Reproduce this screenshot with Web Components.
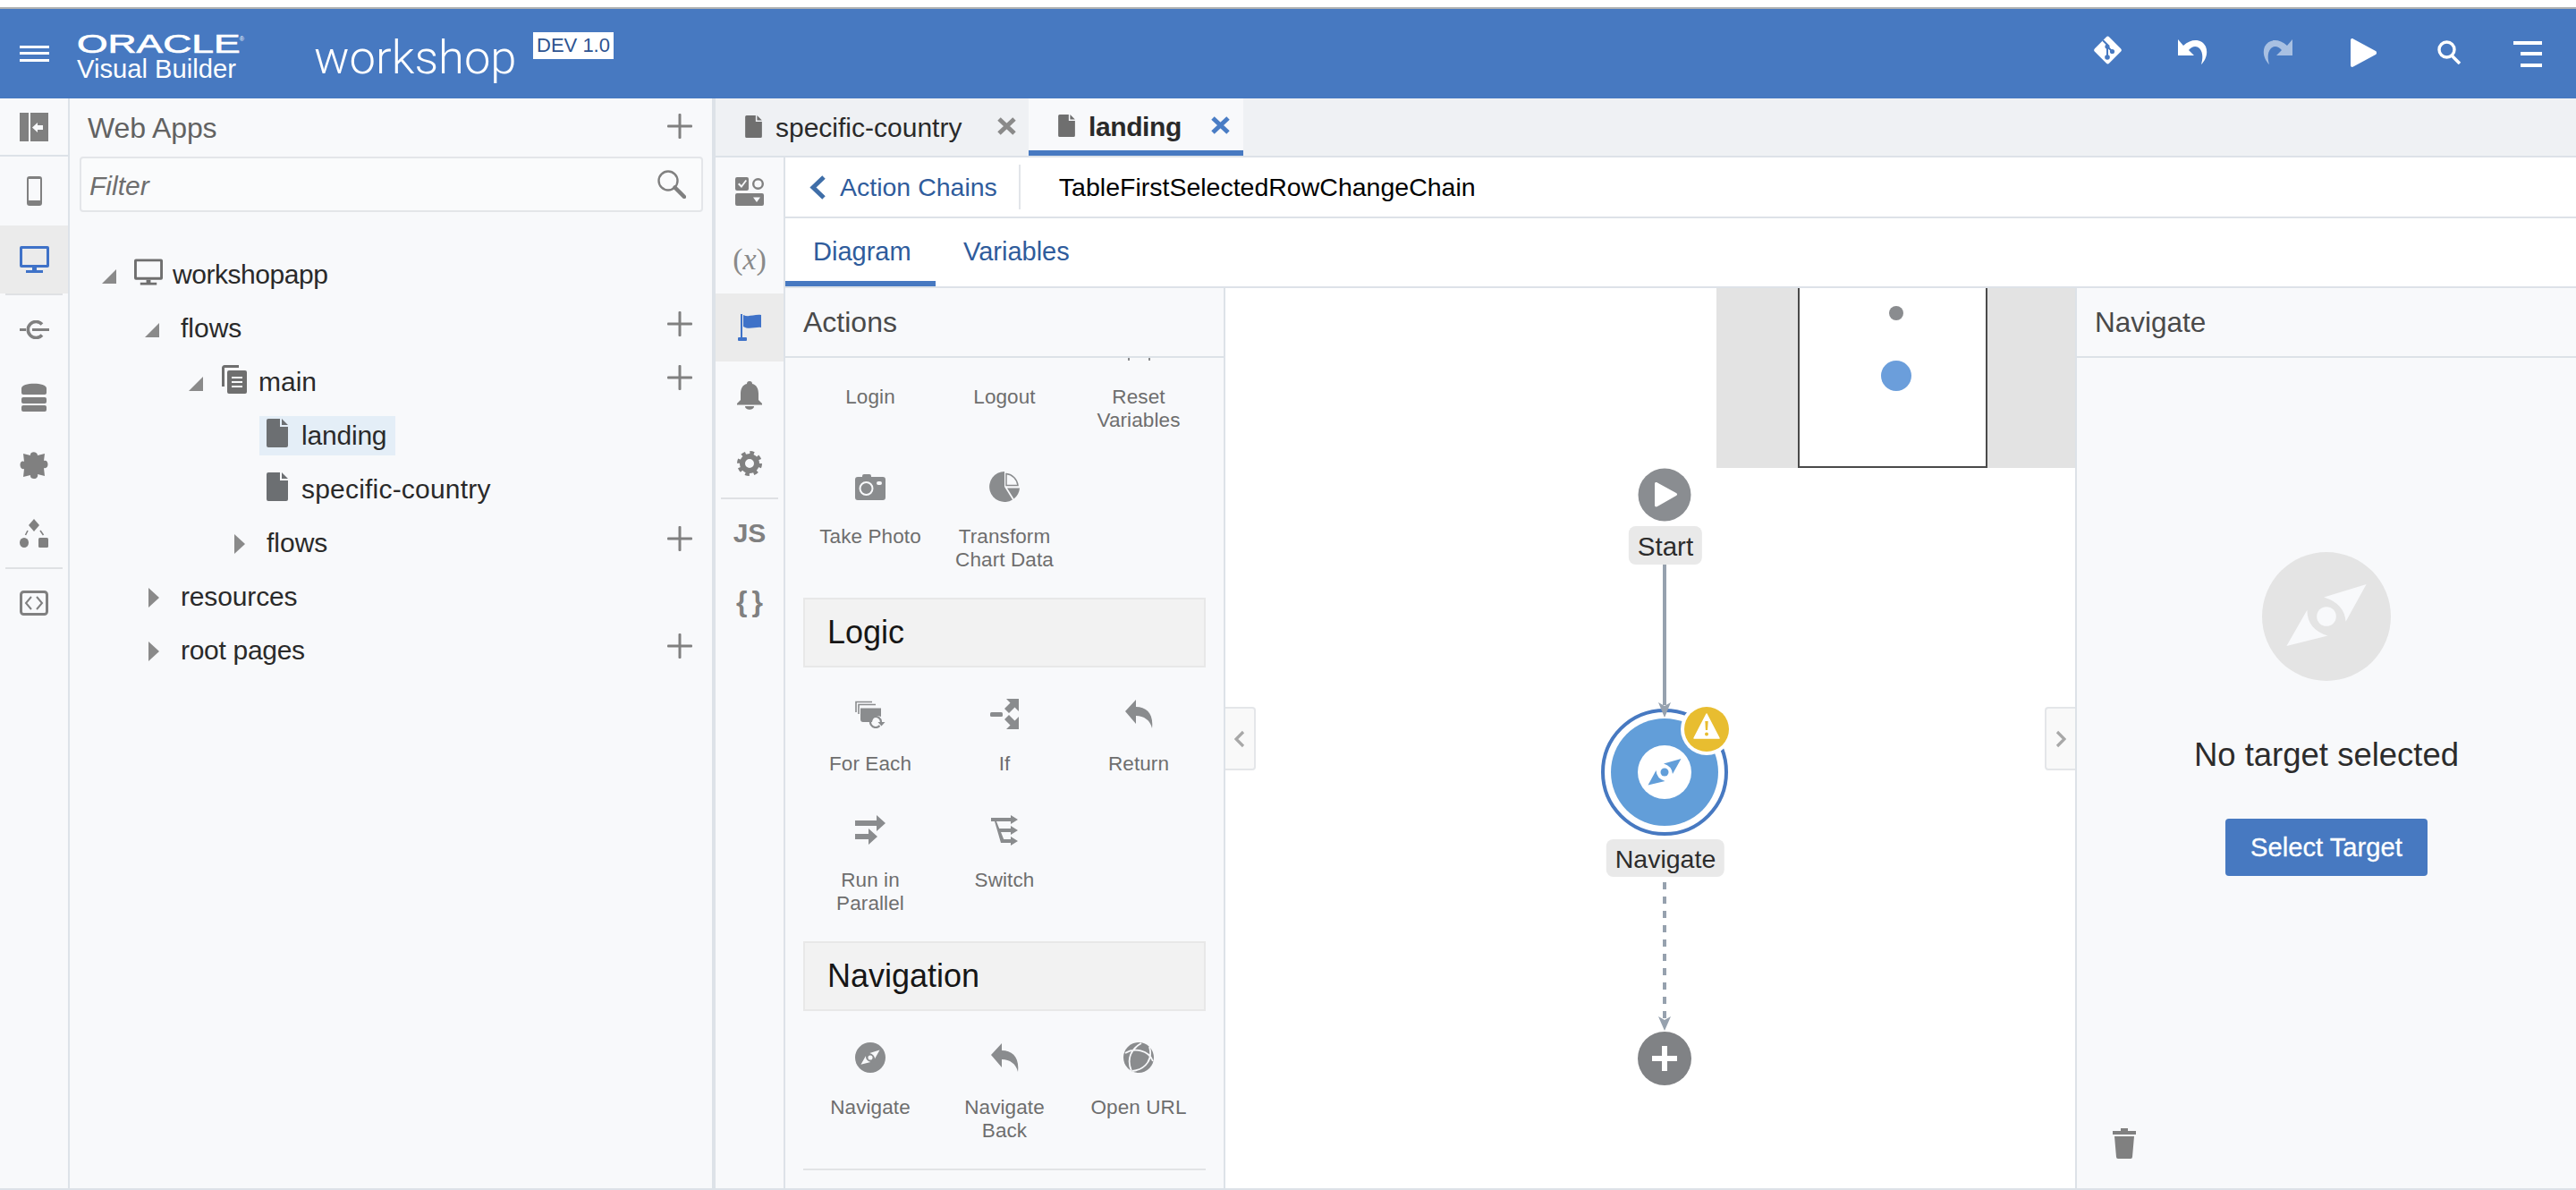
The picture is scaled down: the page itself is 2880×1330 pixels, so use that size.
<!DOCTYPE html>
<html lang="en"><head><meta charset="utf-8"><title>Visual Builder</title>
<style>
html,body{margin:0;padding:0;background:#fff;font-family:"Liberation Sans",Arial,sans-serif;overflow:hidden}
</style></head><body>
<vb-app>
  <vb-header slot="header"></vb-header>
  <vb-rail slot="rail"></vb-rail>
  <vb-tree slot="tree">
    <vb-tree-row tx="36" tw="16" twist="open" ix="72" icon="monitor" iw="32" gap="11" style="letter-spacing:-.45px">workshopapp</vb-tree-row>
    <vb-tree-row tx="84" tw="16" twist="open" ix="124" add>flows</vb-tree-row>
    <vb-tree-row tx="133" tw="16" twist="open" ix="170" icon="pages" iw="28" gap="13" add>main</vb-tree-row>
    <vb-tree-row ix="220" icon="doc" iw="24" gap="15" selected style="letter-spacing:-.2px">landing</vb-tree-row>
    <vb-tree-row ix="220" icon="doc" iw="24" gap="15" style="letter-spacing:.2px">specific-country</vb-tree-row>
    <vb-tree-row tx="184" tw="12" twist="closed" ix="220" add>flows</vb-tree-row>
    <vb-tree-row tx="88" tw="12" twist="closed" ix="124" style="letter-spacing:-.15px">resources</vb-tree-row>
    <vb-tree-row tx="88" tw="12" twist="closed" ix="124" add style="letter-spacing:-.3px">root pages</vb-tree-row>
  </vb-tree>
  <vb-editor slot="editor">
    <vb-tabstrip slot="tabs"></vb-tabstrip>
    <vb-subrail slot="subrail"></vb-subrail>
    <vb-crumb slot="crumb"></vb-crumb>
    <vb-subtabs slot="subtabs"></vb-subtabs>
    <vb-palette slot="palette"></vb-palette>
    <vb-canvas slot="canvas"></vb-canvas>
    <vb-target slot="target"></vb-target>
  </vb-editor>
</vb-app>
<script>
const ICONS={
menu:[33,18,'<path d="M0 0h33v3H0zM0 7h33v3H0zM0 15h33v3H0z"/>'],
collapse:[32,32,'<path d="M0 0h10v32H0z"/><path fill-rule="evenodd" d="M12 0h20v32H12zM14 16.500l6 5.500v-3h6v-5h-6v-3z"/>'],
phone:[17,33,'<path fill-rule="evenodd" d="M3 0h11a3 3 0 0 1 3 3v27a3 3 0 0 1-3 3H3a3 3 0 0 1-3-3V3a3 3 0 0 1 3-3zM2 3v24h13V3z"/>'],
monitor:[33,30,'<path fill-rule="evenodd" d="M2 0h29a2 2 0 0 1 2 2v20a2 2 0 0 1-2 2H2a2 2 0 0 1-2-2V2a2 2 0 0 1 2-2zM3 3v18h27V3z"/><path d="M14 24h5v3h-5zM7 27h19v3H7z"/>'],
plug:[33,21,'<path d="M25 4.500A9 9 0 1 0 25 16.500" fill="none" stroke="currentColor" stroke-width="3.600"/><path d="M0 10.500h7M14 10.500h19" stroke="currentColor" stroke-width="3"/>'],
db:[28,32,'<path d="M0 11V6C0-1 28-1 28 6v5a2 2 0 0 1-2 2H2a2 2 0 0 1-2-2z"/><rect y="16" width="28" height="7" rx="2"/><rect y="25" width="28" height="7" rx="2"/>'],
puzzle:[32,32,'<path d="M4 3l8 2C11 0 20 0 20 5l8-2-1 8c6-2 6 10 0 8l1 9-8-2c2 6-9 7-8 1l-8 2 1-9C-1 22-1 9 5 12z"/>'],
flow:[32,32,'<path d="M16 0l6 7-6 7-6-7z"/><ellipse cx="5" cy="26.500" rx="5" ry="5.500"/><rect x="21" y="21" width="11" height="11" rx="1.500"/><path d="M9 13l-2.500 5M23 13l3.500 5" fill="none" stroke="currentColor" stroke-width="1.600"/>'],
code:[32,28,'<rect x="1.500" y="1.500" width="29" height="25" rx="3" fill="none" stroke="currentColor" stroke-width="3"/><path d="M13 7l-6 7 6 7M19 7l6 7-6 7" fill="none" stroke="currentColor" stroke-width="2"/>'],
form:[32,32,'<path fill-rule="evenodd" d="M2 0h11a2 2 0 0 1 2 2v11a2 2 0 0 1-2 2H2a2 2 0 0 1-2-2V2a2 2 0 0 1 2-2zM3 8l4 4 6-8-1.500-1L7 9 4.500 6.500z"/><circle cx="25.500" cy="7.500" r="5.300" fill="none" stroke="currentColor" stroke-width="2.400"/><path fill-rule="evenodd" d="M2 18h28a2 2 0 0 1 2 2v10a2 2 0 0 1-2 2H2a2 2 0 0 1-2-2V20a2 2 0 0 1 2-2zM20 22.500l4 5.500 4-5.500z"/>'],
flag:[26,30,'<path d="M3 0h2v26H3z"/><rect y="26" width="10" height="4" rx="1"/><path d="M6 1c6 3 12-1 20 0v14c-6-1-14 3-20-1z"/>'],
bell:[28,32,'<path d="M14 0c2 0 3 1 3 3 5 1 7 6 7 11v7l4 4v1.500H0V25l4-4v-7C4 9 6 4 11 3c0-2 1-3 3-3z"/><path d="M9 28h10c0 5-10 5-10 0z"/>'],
gear:[28,28,'<circle cx="14" cy="14" r="8" fill="none" stroke="currentColor" stroke-width="6"/><circle cx="14" cy="14" r="12" fill="none" stroke="currentColor" stroke-width="4" stroke-dasharray="4.700 4.720"/>'],
search:[32,32,'<circle cx="12" cy="12" r="10.500" fill="none" stroke="currentColor" stroke-width="2.400"/><path d="M19.500 19.500L30 30" stroke="currentColor" stroke-width="4.500" stroke-linecap="round"/>'],
doc:[24,32,'<path d="M2 0h13v9h9v21a2 2 0 0 1-2 2H2a2 2 0 0 1-2-2V2a2 2 0 0 1 2-2zM17 0l7 7h-7z"/>'],
pages:[28,32,'<path d="M1.500 24V3a1.500 1.500 0 0 1 1.500-1.500h16" fill="none" stroke="currentColor" stroke-width="3"/><path fill-rule="evenodd" d="M8 6h18a2 2 0 0 1 2 2v22a2 2 0 0 1-2 2H8a2 2 0 0 1-2-2V8a2 2 0 0 1 2-2zM11 13v2h12v-2zM11 18v2h12v-2zM11 23v2h12v-2z"/>'],
plus:[28,28,'<rect x="12.500" width="3" height="28" rx="1"/><rect y="12.500" width="28" height="3" rx="1"/>'],
open:[16,16,'<path d="M16 0v16H0z"/>'],
closed:[12,22,'<path d="M0 0l12 11L0 22z"/>'],
x:[21,20,'<path d="M2 2l17 16M19 2L2 18" stroke="currentColor" stroke-width="5" fill="none"/>'],
back:[20,27,'<path d="M17 2L5 13.500 17 25" fill="none" stroke="currentColor" stroke-width="5"/>'],
camera:[34,30,'<path d="M8 4V3a2 2 0 0 1 2-2h6a2 2 0 0 1 2 2v1h13a3 3 0 0 1 3 3v20a3 3 0 0 1-3 3H3a3 3 0 0 1-3-3V7a3 3 0 0 1 3-3z"/><circle cx="12.500" cy="17" r="7" fill="none" stroke="#f8f9fb" stroke-width="2"/><rect x="24" y="9" width="6" height="4" rx="2" fill="#f8f9fb"/>'],
pie:[34,34,'<path d="M17 0A17 17 0 1 0 26 31.500L17 17z"/><path d="M19 2.500A14.500 14.500 0 0 1 32 15.500H19z" fill="none" stroke="currentColor" stroke-width="1.500"/><path d="M20 18.500h14A17 17 0 0 1 27.500 30.500z"/>'],
foreach:[34,31,'<path d="M1 13V1.500h18M4 15V4.500h19" fill="none" stroke="currentColor" stroke-width="1.600"/><path d="M6 8.500h23v9.500c-5-2-9 1-10 6H9a3 3 0 0 1-3-3z"/><path d="M29 24a6 6 0 1 0-1.500 4" fill="none" stroke="currentColor" stroke-width="2.200"/><path d="M25.500 24h8l-4 4.500z"/>'],
if:[32,34,'<rect y="15" width="14" height="5" rx="1.500"/><path d="M18 0h14v14l-4.500-4.500L21 16l-5-5 6.500-6.500zM18 34h14V20l-4.500 4.500L21 18l-5 5 6.500 6.500z"/>'],
return:[31,32,'<path d="M0 13L12 0v8c12 0 20 8 18 24-2-9-9-14-18-14v9z"/>'],
parallel:[34,34,'<path d="M0 6h24V0l10 9-10 9v-6H0zM0 21h15v-6l10 9-10 9v-6H0z"/>'],
switch:[30,34,'<path d="M0 3h22V0l8 5-8 5V7H6l3.200 8H22v-3l8 5-8 5v-3H11l3.200 8H22v-3l8 5-8 5v-3H11L4 7H0z"/>'],
compass:[100,100,'<circle cx="50" cy="50" r="50"/><g fill="var(--hole,#f8f9fb)"><path d="M81 25L48 35Q64 40 65 54zM19 73L35 45Q35 60 51 65z"/><circle cx="50" cy="50" r="7.500"/></g>'],
globe:[34,34,'<circle cx="17" cy="17" r="17"/><path d="M20 1C9 7 3 18 9 32M2 12c10-6 26-4 31 9M29 5c4 13-3 25-19 27" fill="none" stroke="#f8f9fb" stroke-width="1.800"/>'],
trash:[26,34,'<path d="M9 0h8v3h9v4H0V3h9zM2 9h22l-2 23a2 2 0 0 1-2 2H6a2 2 0 0 1-2-2z"/>'],
git:[33,32,'<rect x="5" y="4.500" width="23" height="23" rx="2.500" transform="rotate(45 16.500 16)"/><g fill="none" stroke="#4779c1" stroke-width="2"><path d="M11 5l5 5v15M16 12l5 5"/></g><g fill="#4779c1"><circle cx="16" cy="12" r="2.600"/><circle cx="16" cy="24" r="2.800"/><circle cx="21.500" cy="17.500" r="2.600"/></g>'],
undo:[33,28,'<path d="M0 0v18h18l-6-6c4-5 9-5 12-2 4 4 4 11 2 18 5-5 8-13 5-20C27 0 16-2 6 7z"/>'],
redo:[33,28,'<path d="M33 0v18H15l6-6c-4-5-9-5-12-2-4 4-4 11-2 18-5-5-8-13-5-20C6 0 17-2 27 7z"/>'],
play:[29,32,'<path d="M0 2c0-2 2-2.500 3-1.500L28 14c1.500 1 1.500 3 0 4L3 31.500C2 32.500 0 32 0 30z"/>'],
hsearch:[27,27,'<circle cx="10.500" cy="10.500" r="8.500" fill="none" stroke="currentColor" stroke-width="3.400"/><path d="M16 17l9 9" stroke="currentColor" stroke-width="3.600"/>'],
lines:[32,29,'<path d="M0 0h32v4H0zM8 12h24v4H8zM8 25h24v4H8z"/>'],
chev:[12,20,'<path d="M2 2l8 8-8 8" fill="none" stroke="currentColor" stroke-width="3.200"/>'],
chevl:[12,20,'<path d="M10 2l-8 8 8 8" fill="none" stroke="currentColor" stroke-width="3.200"/>'],
dots:[34,34,'<path d="M5 29h2v3H5zM28 29h2v3h-2z"/>']
};
function def(name,css,html,init){
  customElements.define(name,class extends HTMLElement{
    connectedCallback(){
      if(this.shadowRoot)return;
      const r=this.attachShadow({mode:'open'});
      const h=typeof html==='function'?html(this):html;
      r.innerHTML='<style>'+css+'</style>'+h;
    }
  });
}
function ic(n,w,h,c,extra){return '<vb-icon name="'+n+'"'+(w?' w="'+w+'"':'')+(h?' h="'+h+'"':'')+' style="'+(c?'color:'+c+';':'')+(extra||'')+'"></vb-icon>';}
def('vb-icon',':host{display:inline-flex;flex:none;line-height:0}svg{display:block;fill:currentColor}',el=>{
  const d=ICONS[el.getAttribute('name')];
  const w=el.getAttribute('w')||d[0],h=el.getAttribute('h')||d[1];
  return '<svg xmlns="http://www.w3.org/2000/svg" width="'+w+'" height="'+h+'" viewBox="0 0 '+d[0]+' '+d[1]+'">'+d[2]+'</svg>';
});
def('vb-app',`:host{display:flex;flex-direction:column;height:1330px;width:2880px;overflow:hidden}
.top{height:8px;background:#fff;flex:none}.rule{height:2px;background:#aeb0b1;flex:none}
.body{flex:1;display:flex;min-height:0;border-bottom:2px solid #dde2e8}`,
`<div class="top"></div><div class="rule"></div><slot name="header"></slot><div class="body"><slot name="rail"></slot><slot name="tree"></slot><slot name="editor"></slot></div>`);
def('vb-header',`:host{display:flex;flex:none;height:100px;background:#4779c1;color:#fff;position:relative}
.ham{margin:41px 0 0 22px;display:block}
.logo{margin:18.500px 0 0 31px;width:267px;flex:none;display:flex;flex-direction:column}
.o{height:30px;line-height:30px;font-size:30px;white-space:nowrap;-webkit-text-stroke:.7px #fff}
.o b{display:inline-block;font-weight:400;transform:scaleX(1.48);transform-origin:0 50%;width:186px}
.o i{font-size:7px;font-style:normal;vertical-align:13px;margin-left:-1px;-webkit-text-stroke:0}
.v{font-size:29.200px;line-height:34px;margin-top:1px;white-space:nowrap}
.w{font-family:Roboto,"Liberation Sans",sans-serif;font-weight:300;font-size:52.500px;line-height:60px;margin:24px 0 0 -2px;width:245px;flex:none;white-space:nowrap}
.b{flex:none;align-self:flex-start;margin-top:26px;width:90px;height:30px;background:#fff;color:#2d5390;font-size:22px;line-height:30px;text-align:center;white-space:nowrap;font-family:"Liberation Sans",sans-serif}
.r{margin-left:auto;display:flex;padding-right:38px;align-items:flex-start}`,
`<div class="ham">${ic('menu')}</div>
<div class="logo"><div class="o"><b>ORACLE<i style="display:inline-block;transform:scaleX(.68)">®</i></b></div><div class="v">Visual Builder</div></div>
<div class="w">workshop</div><div class="b">DEV 1.0</div>
<div class="r">${ic('git',0,0,'#fff','margin-top:30px')}${ic('undo',0,0,'#fff','margin:34px 0 0 62px')}${ic('redo',0,0,'#a8c0e2','margin:34px 0 0 62px')}${ic('play',0,0,'#fff','margin:33px 0 0 65px')}${ic('hsearch',0,0,'#fff','margin:35px 0 0 68px')}${ic('lines',0,0,'#fff','margin:36px 0 0 58px')}</div>`);
def('vb-rail-item',`:host{display:flex;align-items:center;justify-content:center;height:76px;flex:none;color:#808080}
:host([sel]){background:#ebebeb}`,'<slot></slot>');
def('vb-sep',`:host{display:block;height:2px;margin:0 6px;background:#dfe1e4;flex:none}`,'');
def('vb-rail',`:host{display:flex;flex-direction:column;width:76px;flex:none;background:#f8f9fb;border-right:2px solid #dde2e8}
.f{height:63px;border-bottom:2px solid #dde2e8}.m{height:77px}`,
`<vb-rail-item class="f">${ic('collapse')}</vb-rail-item>
<vb-rail-item class="m">${ic('phone')}</vb-rail-item>
<vb-rail-item sel>${ic('monitor',0,0,'#3f72c8')}</vb-rail-item><vb-sep></vb-sep>
<vb-rail-item>${ic('plug')}</vb-rail-item><vb-rail-item>${ic('db')}</vb-rail-item><vb-rail-item>${ic('puzzle')}</vb-rail-item>
<vb-rail-item style="height:76px">${ic('flow')}</vb-rail-item><vb-sep></vb-sep><vb-rail-item>${ic('code')}</vb-rail-item>`);
def('vb-tree',`:host{display:flex;flex-direction:column;width:718px;flex:none;background:#f8f9fb;border-right:4px solid #dde2e8;box-sizing:content-box}
.h{height:65px;display:flex;align-items:center;justify-content:space-between;padding:0 22px 0 20px;box-sizing:border-box;font-size:32px;color:#626262;flex:none}
.h span{margin-top:2px;letter-spacing:-.1px}.h vb-icon{margin-top:-4px}
.fl{height:62px;box-sizing:border-box;margin:0 10px 40px 11px;border:2px solid #e4e6e9;border-radius:4px;background:#fafbfc;display:flex;align-items:center;justify-content:space-between;padding:0 17px 0 9px;font-style:italic;font-size:30px;color:#6e6e6e;flex:none}
.fl span{margin-top:3px}`,
`<div class="h"><span>Web Apps</span>${ic('plus',0,0,'#808080')}</div>
<div class="fl"><span>Filter</span>${ic('search',0,0,'#808080')}</div><slot></slot>`);
def('vb-tree-row',`:host{display:flex;align-items:center;height:60px;flex:none;color:#2a2a2a;font-size:30px;box-sizing:border-box;padding-right:22px;white-space:nowrap}
.t{flex:none;display:flex;color:#8a8a8a}
.c{display:flex;align-items:center;height:44px}
.sel{background:#e4eef7;padding:0 10px 0 8px}
.a{margin-left:auto;display:flex}`,
el=>{
 const tx=+el.getAttribute('tx')||0,tw=+el.getAttribute('tw')||0,ix=+el.getAttribute('ix'),tn=el.getAttribute('twist');
 const s=el.hasAttribute('selected');const pad=s?8:0;
 const icon=el.getAttribute('icon');
 return (tn?'<span class="t" style="margin-left:'+tx+'px;margin-top:'+(tn==='open'?4:2)+'px">'+ic(tn,0,0,'#8a8a8a')+'</span>':'')+
 '<div class="c'+(s?' sel':'')+'" style="margin-left:'+(ix-tx-tw-pad)+'px">'+(icon?ic(icon,el.getAttribute('iw'),0,icon==='doc'?'#6c6f72':'#6f6f6f','margin-right:'+el.getAttribute('gap')+'px;margin-top:-6px'):'')+'<slot></slot></div>'+
 (el.hasAttribute('add')?'<span class="a">'+ic('plus',0,0,'#808080','margin-top:-10px')+'</span>':'');
});
def('vb-editor',`:host{display:grid;flex:1;min-width:0;grid-template-columns:78px 492px 950px 560px;grid-template-rows:66px 68px 78px 1fr;min-height:0}
::slotted([slot=tabs]){grid-column:1/5}::slotted([slot=subrail]){grid-row:2/5}
::slotted([slot=crumb]){grid-column:2/5}::slotted([slot=subtabs]){grid-column:2/5}`,
`<slot name="tabs"></slot><slot name="subrail"></slot><slot name="crumb"></slot><slot name="subtabs"></slot><slot name="palette"></slot><slot name="canvas"></slot><slot name="target"></slot>`);
def('vb-tab',`:host{display:flex;align-items:center;height:64px;box-sizing:border-box;flex:none;font-size:30px;color:#2a2a2a;white-space:nowrap;padding-left:33px;padding-top:2px}
:host([active]){background:#f8f9fb;border-bottom:6px solid #4779c1;font-weight:700;padding-top:6px;letter-spacing:-.4px}`,
el=>{const a=el.hasAttribute('active');return ic('doc',19,25,'#6f6f6f','margin-right:15px;margin-top:-4px')+'<slot></slot><span style="margin-left:auto;margin-right:'+(a?15:14)+'px;display:flex;margin-top:-4px">'+ic('x',0,0,a?'#4a7dc5':'#8a8a8a')+'</span>';});
def('vb-tabstrip',`:host{display:flex;background:#eff1f4;border-bottom:2px solid #dde2e8;box-sizing:border-box;height:66px}`,
`<vb-tab style="width:350px">specific-country</vb-tab><vb-tab active style="width:240px">landing</vb-tab>`);
def('vb-subrail',`:host{display:flex;flex-direction:column;background:#f8f9fb;border-right:2px solid #dde2e8;box-sizing:border-box;height:1152px;color:#808080}
.s{font-family:"Liberation Serif",serif;font-size:34px;color:#8a8a8a;white-space:nowrap}
.s i{font-size:34px}
.b{font-weight:700;font-size:30px;color:#808080;white-space:nowrap}
.c{letter-spacing:5px;margin-right:-5px;font-size:32px}`,
`<vb-rail-item>${ic('form')}</vb-rail-item>
<vb-rail-item><span class="s">(<i>x</i>)</span></vb-rail-item>
<vb-rail-item sel>${ic('flag',0,0,'#3f72c8')}</vb-rail-item>
<vb-rail-item>${ic('bell')}</vb-rail-item>
<vb-rail-item>${ic('gear')}</vb-rail-item><vb-sep></vb-sep>
<vb-rail-item><span class="b">JS</span></vb-rail-item>
<vb-rail-item><span class="b c">{}</span></vb-rail-item>`);
def('vb-crumb',`:host{display:flex;align-items:center;background:#fff;border-bottom:2px solid #dde2e8;box-sizing:border-box;height:68px;padding-left:26px;font-size:28.500px;white-space:nowrap;color:#2f5c9c}
.l{margin-left:15px}.d{width:2px;height:50px;background:#e2e5e9;margin:0 43px 0 24px}.t{color:#000;font-size:28.500px}`,
`${ic('back',0,0,'#3f6ea8')}<span class="l">Action Chains</span><span class="d"></span><span class="t">TableFirstSelectedRowChangeChain</span>`);
def('vb-subtabs',`:host{display:flex;background:#fff;border-bottom:2px solid #dde2e8;box-sizing:border-box;height:78px;font-size:29px;color:#2f5c9c;white-space:nowrap}
.a{width:168px;box-sizing:border-box;border-bottom:6px solid #4779c1;padding:21px 0 0 31px;height:76px}.b{padding:21px 0 0 31px}`,
`<div class="a">Diagram</div><div class="b">Variables</div>`);
def('vb-pal-head',`:host{display:block;height:78px;box-sizing:border-box;background:#f2f2f2;border:2px solid #e8e8e8;padding-left:25px;font-size:36px;line-height:74px;color:#161616;margin-bottom:20px;grid-column:1/4}`,'<slot></slot>');
def('vb-pal-item',`:host{display:flex;flex-direction:column;align-items:center;padding:15px 0 29px;box-sizing:border-box;width:150px}
.i{height:34px;display:flex;align-items:center;justify-content:center;color:#8a8c8e;--hole:#f8f9fb}
.l{margin-top:26px;font-size:22.500px;line-height:26px;color:#6e6e6e;text-align:center;white-space:pre-line;letter-spacing:.1px}`,
el=>{const n=el.getAttribute('icon');return '<div class="i">'+(n?ic(n,n==='compass'?34:0,n==='compass'?34:0):'')+'</div><div class="l"><slot></slot></div>';});
def('vb-palette',`:host{display:flex;flex-direction:column;background:#f8f9fb;border-right:2px solid #dde2e8;box-sizing:border-box;min-height:0;overflow:hidden}
.h{height:78px;box-sizing:border-box;border-bottom:2px solid #dde2e8;padding-left:20px;font-size:32px;line-height:76px;color:#4a4a4a;flex:none}
.v{flex:1;overflow:hidden;min-height:0}
.g{display:grid;grid-template-columns:repeat(3,150px);margin:-44px 20px 0}
.e{grid-column:1/4;height:2px;background:#e2e4e6}`,
`<div class="h">Actions</div><div class="v"><div class="g">
<vb-pal-item>Login</vb-pal-item><vb-pal-item>Logout</vb-pal-item><vb-pal-item icon="dots">Reset
Variables</vb-pal-item>
<vb-pal-item icon="camera">Take Photo</vb-pal-item><vb-pal-item icon="pie">Transform
Chart Data</vb-pal-item><span></span>
<vb-pal-head>Logic</vb-pal-head>
<vb-pal-item icon="foreach">For Each</vb-pal-item><vb-pal-item icon="if">If</vb-pal-item><vb-pal-item icon="return">Return</vb-pal-item>
<vb-pal-item icon="parallel">Run in
Parallel</vb-pal-item><vb-pal-item icon="switch">Switch</vb-pal-item><span></span>
<vb-pal-head>Navigation</vb-pal-head>
<vb-pal-item icon="compass">Navigate</vb-pal-item><vb-pal-item icon="return">Navigate
Back</vb-pal-item><vb-pal-item icon="globe">Open URL</vb-pal-item>
<div class="e"></div></div></div>`);
def('vb-node-label',`:host{position:absolute;transform:translateX(-50%);height:43px;line-height:45px;padding:0 10px;background:#e9e9e9;border-radius:8px;font-size:29.500px;color:#2c2c2c;white-space:nowrap;box-sizing:border-box}`,'<slot></slot>');
def('vb-canvas',`:host{display:block;position:relative;background:#fff;overflow:hidden;min-height:0}
.mm{position:absolute;right:0;top:0;width:401px;height:201px;background:#e3e3e3}
.vp{position:absolute;left:91px;top:0;width:212px;height:201px;background:#fff;box-sizing:border-box;border:solid #4a4a4a;border-width:0 2px 2px}
.d{position:absolute;border-radius:50%;transform:translate(-50%,-50%)}
.hd{position:absolute;top:468px;width:34px;height:71px;box-sizing:border-box;border:2px solid #e4e6e9;background:#f9f9f9;display:flex;align-items:center;justify-content:center;color:#a8a8a8}
svg.o{position:absolute;left:0;top:0}`,
`<div class="mm"><div class="vp"><div class="d" style="left:108px;top:28px;width:16px;height:16px;background:#8a8c8f"></div><div class="d" style="left:108px;top:98px;width:34px;height:34px;background:#6b9edb"></div></div></div>
<div class="hd" style="left:0;border-left:0;border-radius:0 4px 4px 0">${ic('chevl',0,0,'#a8a8a8')}</div>
<div class="hd" style="right:0;border-right:0;border-radius:4px 0 0 4px">${ic('chev',0,0,'#a8a8a8')}</div>
<svg class="o" width="950" height="1006" viewBox="0 0 950 1006" xmlns="http://www.w3.org/2000/svg">
<circle cx="491" cy="231" r="29.500" fill="#8a8d91"/><path d="M480 219c0-2 1.500-2.500 3-1.500L504 229c1.500 1 1.500 2 0 3l-21 12c-1.500 1-3 .5-3-1.500z" fill="#fff"/>
<path d="M491 309V466" stroke="#96a1ae" stroke-width="4"/>
<circle cx="491" cy="541" r="69" fill="#fff" stroke="#4779c1" stroke-width="4"/><circle cx="491" cy="541" r="60" fill="#629ed9"/><circle cx="491" cy="541" r="30" fill="#fff"/>
<g transform="translate(491 541)" fill="#629ed9"><path d="M18.500-15L-1-9.500Q8-7 9 2zM-18.500 14.500L-9.500-2Q-9 7 .5 10z"/><circle r="4.500"/></g>
<path d="M484 463l7 4 7-4-7 17z" fill="#96a1ae"/>
<circle cx="538" cy="493" r="29" fill="#fff"/><circle cx="538" cy="493" r="25" fill="#e8bd30"/>
<path d="M538 476l14 27h-28z" fill="#fff" stroke="#fff" stroke-width="1.500" stroke-linejoin="round"/><path d="M536.300 484h3.400l-.6 10h-2.200z" fill="#e8bd30"/><circle cx="538" cy="498.500" r="2" fill="#e8bd30"/>
<path d="M491 664V818" stroke="#96a1ae" stroke-width="4" stroke-dasharray="8 8"/>
<path d="M484 814l7 4 7-4-7 16z" fill="#96a1ae"/>
<circle cx="491" cy="861" r="30" fill="#808285"/><path d="M488 847h6v11h11v6h-11v11h-6v-11h-11v-6h11z" fill="#fff"/>
</svg>
<vb-node-label style="left:492px;top:266px">Start</vb-node-label>
<vb-node-label style="left:492px;top:616px;height:42px;font-size:28.500px">Navigate</vb-node-label>`);
def('vb-target',`:host{display:flex;flex-direction:column;align-items:center;background:#f8f9fb;border-left:2px solid #dde2e8;box-sizing:border-box;min-height:0;--hole:#f8f9fb}
.h{align-self:stretch;height:78px;box-sizing:border-box;border-bottom:2px solid #dde2e8;padding-left:20px;font-size:31.500px;line-height:76px;color:#4a4a4a;flex:none}
.ic{margin:217px 0 0 0;color:#e4e4e4;display:flex}
.t{margin-top:61px;font-size:36.500px;line-height:44px;color:#2c2c2c;white-space:nowrap}
.b{margin-top:49px;width:226px;height:64px;border-radius:4px;background:#4779c1;color:#fff;font-size:29.200px;line-height:64px;text-align:center;-webkit-text-stroke:.3px #fff;white-space:nowrap}
.f{margin-top:auto;align-self:flex-start;padding:0 0 33px 40px;display:flex}`,
`<div class="h">Navigate</div><div class="ic">${ic('compass',144,144)}</div><div class="t">No target selected</div><div class="b">Select Target</div><div class="f">${ic('trash',0,0,'#808080')}</div>`);
</script>
</body></html>
